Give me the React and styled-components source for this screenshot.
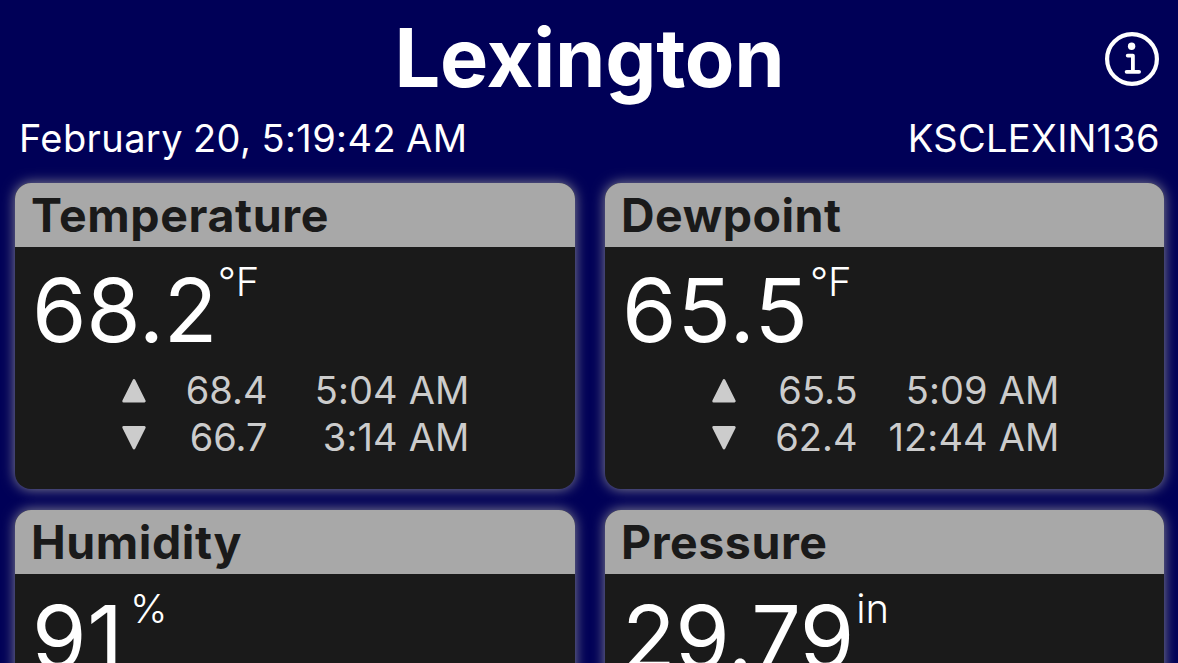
import React from 'react';
import styled, { createGlobalStyle } from 'styled-components';

const GlobalStyle = createGlobalStyle`
  * {
    box-sizing: border-box;
  }

  body {
    margin: 0;
    background-color: #000057;
    overflow: hidden;
  }
`;

const Layout = styled.div`
  width: 1178px;
  height: 663px;
  overflow: hidden;
  padding: 0 14px 0 15px;
  font-family: Inter, "Liberation Sans", sans-serif;
  background-color: #000057;
  color: white;
`;

const Header = styled.header`
  display: grid;
  grid-template-columns: 56px 1fr 56px;
  align-items: center;
  height: 118px;
  padding: 0 4px 0 3px;
`;

const Heading = styled.h1`
  grid-column: 2;
  margin: 0;
  padding: 0 0 1px 1px;
  text-align: center;
  font-size: 81px;
  font-weight: 700;
  line-height: 117px;
  letter-spacing: -.2px;
`;

const InfoIcon = styled.svg`
  display: block;
  width: 56px;
  height: 56px;
`;

const StationBar = styled.div`
  display: flex;
  justify-content: space-between;
  height: 40px;
  margin-bottom: 25px;
  padding: 0 4px;
  font-size: 38px;
  line-height: 41px;
  white-space: nowrap;
`;

const Label = styled.span`
  letter-spacing: ${props => props.$tracking || 0}px;
  word-spacing: ${props => props.$wordGap || 0}px;
`;

const Cards = styled.main`
  display: grid;
  grid-template-columns: 560px 559px;
  justify-content: space-between;
  grid-auto-rows: 306px;
  row-gap: 21px;
`;

const Card = styled.section`
  border-radius: 16px;
  overflow: hidden;
  background-color: #1a1a1a;
  box-shadow: 0 0 13px rgba(170, 168, 160, .82);
`;

const CardTitle = styled.h2`
  margin: 0;
  height: 64px;
  padding-left: 16px;
  background-color: #a8a8a8;
  color: #1a1a1a;
  font-size: 46.5px;
  font-weight: 700;
  line-height: 65px;
  letter-spacing: ${props => props.$tracking || 0}px;
`;

const Reading = styled.div`
  display: flex;
  align-items: flex-start;
  height: 94px;
  margin: 16px 0 10px;
  padding-left: 17px;
`;

const Value = styled.span`
  font-size: 88px;
  line-height: 94px;
  letter-spacing: ${props => props.$tracking || 0}px;
`;

const Unit = styled.span`
  margin-left: ${props => props.$gap}px;
  font-size: 40px;
  font-weight: 300;
  line-height: 37px;
`;

const Extreme = styled.div`
  display: grid;
  grid-template-columns: 28px 120px 202px;
  align-items: center;
  height: 47px;
  padding-left: 104.5px;
  color: #ccc;
  font-size: 38px;
  line-height: 47px;
  text-align: right;
  white-space: nowrap;
`;

const Arrow = styled.svg`
  display: block;
  width: 28px;
  height: 28px;
`;

const stations = [
  {
    title: 'Temperature',
    titleTracking: 0.6,
    value: '68.2',
    tracking: -0.2,
    unit: '°F',
    unitGap: 0.4,
    high: ['68.4', '5:04 AM'],
    low: ['66.7', '3:14 AM'],
  },
  {
    title: 'Dewpoint',
    titleTracking: 0.5,
    value: '65.5',
    tracking: 0.9,
    unit: '°F',
    unitGap: 1,
    high: ['65.5', '5:09 AM'],
    low: ['62.4', '12:44 AM'],
  },
  {
    title: 'Humidity',
    titleTracking: 0.55,
    value: '91',
    tracking: 0.8,
    unit: '%',
    unitGap: 6,
  },
  {
    title: 'Pressure',
    titleTracking: 0.55,
    value: '29.79',
    tracking: -0.3,
    unit: 'in',
    unitGap: 2,
  },
];

const ExtremeRow = ({ down, entry }) =>
  <Extreme>
    <Arrow viewBox="0 0 28 28">
      <path
        d={down ? 'M14 24.2 L24.4 3.3 H3.6 Z' : 'M14 3.3 L24.4 24.2 H3.6 Z'}
        fill="#ccc"
        stroke="#ccc"
        strokeWidth="2.6"
        strokeLinejoin="round"
      />
    </Arrow>
    <Label>{entry[0]}</Label>
    <Label $tracking={0.15}>{entry[1]}</Label>
  </Extreme>;

const SensorCard = ({ title, titleTracking, value, tracking, unit, unitGap, high, low }) =>
  <Card>
    <CardTitle $tracking={titleTracking}>{title}</CardTitle>
    <Reading>
      <Value $tracking={tracking}>{value}</Value>
      <Unit $gap={unitGap}>{unit}</Unit>
    </Reading>
    { high && <ExtremeRow entry={high} /> }
    { low && <ExtremeRow entry={low} down /> }
  </Card>;

const App = () =>
  <Layout>
    <GlobalStyle />
    <Header>
      <Heading>Lexington</Heading>
      <InfoIcon viewBox="0 0 56 56" fill="none" stroke="white">
        <circle cx="28" cy="28" r="24.9" strokeWidth="4.2" />
        <circle cx="27.6" cy="15.3" r="3.7" fill="white" stroke="none" />
        <path
          d="M23.7 24.6 H28.9 V40.8 M22.6 40.8 H35.1"
          strokeWidth="3.8"
          strokeLinecap="round"
          strokeLinejoin="round"
        />
      </InfoIcon>
    </Header>
    <StationBar>
      <Label $tracking={0.4} $wordGap={-1}>February 20, 5:19:42 AM</Label>
      <Label $tracking={0.3}>KSCLEXIN136</Label>
    </StationBar>
    <Cards>
      { stations.map(station => <SensorCard key={station.title} {...station} />) }
    </Cards>
  </Layout>;

export default App;
